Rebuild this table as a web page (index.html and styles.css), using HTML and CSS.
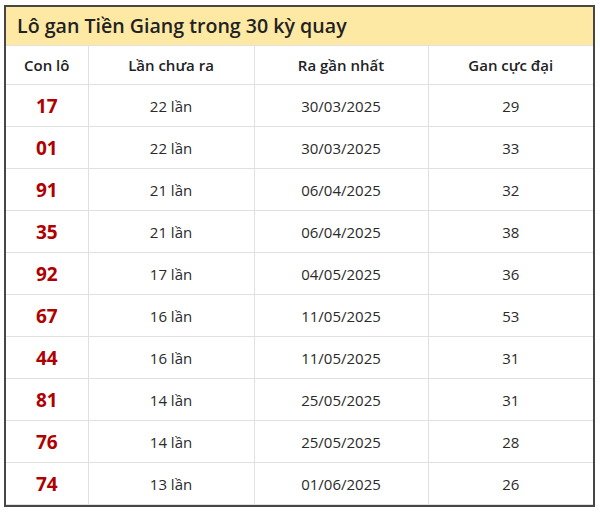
FILE: index.html
```html
<!DOCTYPE html>
<html lang="vi">
<head>
<meta charset="utf-8">
<link rel="stylesheet" href="styles.css">
</head>
<body>
<div class="frame">
  <div class="title">Lô gan Tiền Giang trong 30 kỳ quay</div>
  <table class="tbl">
    <colgroup>
      <col class="c1"><col class="c2"><col class="c3"><col class="c4">
    </colgroup>
    <thead>
      <tr><th>Con lô</th><th>Lần chưa ra</th><th>Ra gần nhất</th><th>Gan cực đại</th></tr>
    </thead>
    <tbody>
      <tr><td class="num">17</td><td>22 lần</td><td>30/03/2025</td><td>29</td></tr>
      <tr><td class="num">01</td><td>22 lần</td><td>30/03/2025</td><td>33</td></tr>
      <tr><td class="num">91</td><td>21 lần</td><td>06/04/2025</td><td>32</td></tr>
      <tr><td class="num">35</td><td>21 lần</td><td>06/04/2025</td><td>38</td></tr>
      <tr><td class="num">92</td><td>17 lần</td><td>04/05/2025</td><td>36</td></tr>
      <tr><td class="num">67</td><td>16 lần</td><td>11/05/2025</td><td>53</td></tr>
      <tr><td class="num">44</td><td>16 lần</td><td>11/05/2025</td><td>31</td></tr>
      <tr><td class="num">81</td><td>14 lần</td><td>25/05/2025</td><td>31</td></tr>
      <tr><td class="num">76</td><td>14 lần</td><td>25/05/2025</td><td>28</td></tr>
      <tr><td class="num">74</td><td>13 lần</td><td>01/06/2025</td><td>26</td></tr>
    </tbody>
  </table>
</div>
</body>
</html>
```

FILE: styles.css
```css
html, body {
  margin: 0;
  padding: 0;
  background: #ffffff;
}
body {
  padding: 5px 0 0 4px;
  font-family: "Open Sans", "Noto Sans", sans-serif;
  color: #222222;
}
.frame {
  width: 587px;
  border: 2px solid #464646;
  background: #ffffff;
}
.title {
  height: 38px;
  background: #fde9a4;
  font-size: 19.6px;
  font-weight: 600;
  line-height: 38px;
  padding-left: 11px;
  color: #222222;
  border-bottom: 1px solid #e2e2e2;
}
.tbl {
  width: 100%;
  border-collapse: collapse;
  table-layout: fixed;
}
.c1 { width: 82px; }
.c2 { width: 166px; }
.c3 { width: 174px; }
.c4 { width: 165px; }
.tbl th, .tbl td {
  border: 1px solid #e0e0e0;
  text-align: center;
  padding: 0;
  font-size: 15px;
  color: #2a2a2a;
}
.tbl tr > :first-child { border-left: none; }
.tbl tr > :last-child { border-right: none; }
.tbl thead tr > * { border-top: none; }
.tbl th {
  height: 38px;
  font-weight: 600;
  color: #222222;
}
.tbl td {
  height: 41px;
}
.tbl td.num {
  color: #b00000;
  font-weight: 700;
  font-size: 19px;
}
```
